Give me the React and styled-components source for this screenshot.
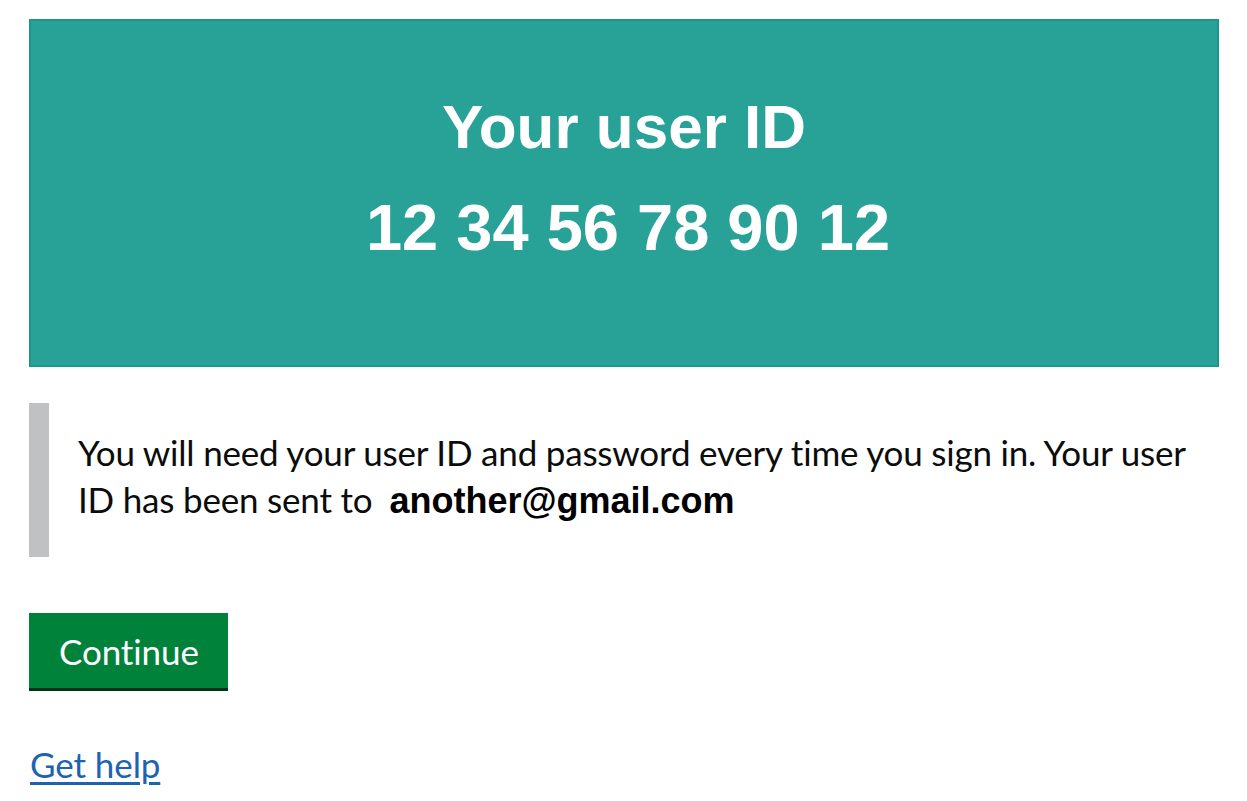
import React from 'react';
import styled, { createGlobalStyle } from 'styled-components';

const GlobalStyle = createGlobalStyle`
  html, body {
    margin: 0;
    padding: 0;
    background: #fff;
  }
  body {
    font-family: Lato, "Liberation Sans", Arial, sans-serif;
    font-variant-ligatures: none;
    color: #0b0c0c;
  }
`;

const PageWrap = styled.main`
  display: flex;
  flex-direction: column;
  align-items: flex-start;
  padding: 19px 28px 0 29px;
`;

const Panel = styled.section`
  box-sizing: border-box;
  width: 1190px;
  height: 348px;
  padding-top: 75px;
  background: #28a197;
  border: 2px solid #1c9689;
  color: #fff;
  text-align: center;
  font-family: "Liberation Sans", Arial, sans-serif;
  font-weight: 700;
`;

const PanelTitle = styled.h1`
  margin: 0;
  font-size: 62px;
  line-height: 62px;
  font-weight: 700;
`;

const PanelBody = styled.div`
  margin-top: 37px;
  padding-left: 8px;
  font-size: 65px;
  line-height: 65px;
`;

const Inset = styled.div`
  box-sizing: border-box;
  width: 1190px;
  height: 154px;
  margin-top: 36px;
  padding: 26px 0 0 29px;
  border-left: 20px solid #bfc1c3;
`;

const InsetText = styled.p`
  margin: 0;
  max-width: 1125px;
  font-size: 35px;
  letter-spacing: -0.2px;
  line-height: 47px;
  color: #0b0c0c;
`;

const Email = styled.strong`
  margin-left: 17px;
  font-family: "Liberation Sans", Arial, sans-serif;
  font-size: 36px;
  letter-spacing: 0;
  font-weight: 700;
  color: #000;
`;

const Button = styled.button`
  margin-top: 56px;
  padding: 17px 29px 15px 30px;
  background: #00823b;
  border: 0;
  border-radius: 0;
  box-shadow: 0 3px 0 #003618;
  color: #fff;
  font-family: Lato, "Liberation Sans", Arial, sans-serif;
  font-size: 35px;
  letter-spacing: -0.1px;
  line-height: 43px;
  cursor: pointer;
`;

const HelpLink = styled.a`
  margin-top: 55px;
  margin-left: 1px;
  font-size: 35px;
  letter-spacing: -0.1px;
  line-height: 43px;
  color: #1d64b0;
  text-decoration: underline;
  text-decoration-thickness: 3px;
  text-underline-offset: 4px;
`;

const App = () => {
  return (
    <>
      <GlobalStyle />
      <PageWrap>
        <Panel>
          <PanelTitle>Your user ID</PanelTitle>
          <PanelBody>12 34 56 78 90 12</PanelBody>
        </Panel>
        <Inset>
          <InsetText>
            You will need your user ID and password every time you sign in. Your user ID has been sent to
            <Email>another@gmail.com</Email>
          </InsetText>
        </Inset>
        <Button type="button">Continue</Button>
        <HelpLink href="#">Get help</HelpLink>
      </PageWrap>
    </>
  );
};

export default App;
